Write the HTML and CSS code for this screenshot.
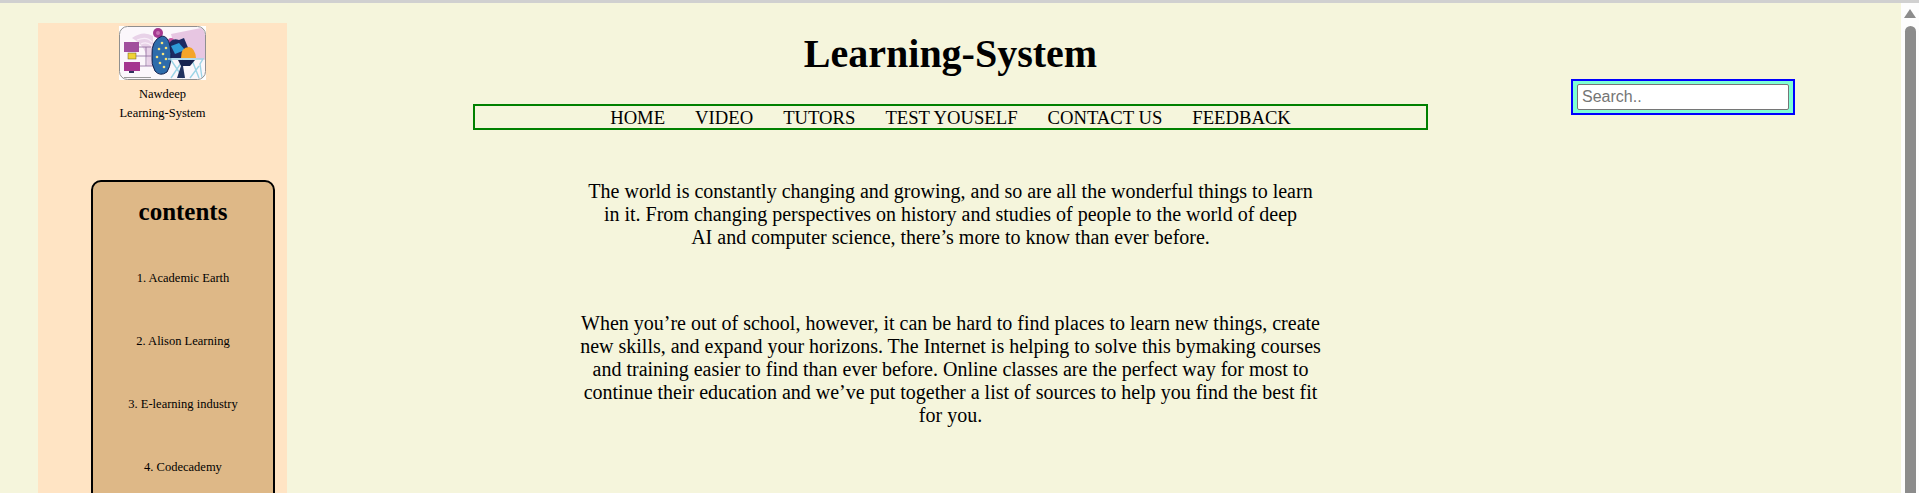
FILE: index.html
```html
<!DOCTYPE html>
<html lang="en">
<head>
    <meta charset="UTF-8">
    <title>Learning-System</title>
    <link rel="stylesheet" href="styles.css">
</head>
<body>
    <div class="topline"></div>
    <div class="page">
        <div class="content">
            <aside class="sidebar">
                <svg class="logo" viewBox="0 0 87 54" width="87" height="54">
                    <defs>
                        <filter id="soft" x="0" y="0" width="100%" height="100%"><feGaussianBlur stdDeviation="0.35"/></filter>
                        <clipPath id="frame"><rect x="1" y="1" width="85" height="52" rx="8"/></clipPath>
                    </defs>
                    <rect width="87" height="54" fill="#fff"/>
                    <g clip-path="url(#frame)" filter="url(#soft)">
                        <rect width="87" height="54" fill="#fbf7fb"/>
                        <path d="M52 8 L87 1 L87 34 L58 30 Z" fill="#e7c6e2"/>
                        <path d="M13 12 Q24 4 34 10 L34 40 L28 40 Q30 22 13 12 Z" fill="#e8d2e8"/>
                        <path d="M18 14 Q28 10 33 16 M22 18 Q28 15 33 20" stroke="#f8eef8" stroke-width="1.2" fill="none"/>
                        <path d="M20 21 H32 M17 30 H32 M20 40 H34 M27 21 V40" stroke="#8d6b9c" stroke-width="0.8" fill="none"/>
                        <rect x="5" y="16" width="15" height="10" fill="#a14f9d"/>
                        <rect x="9" y="27" width="8" height="6" fill="#f0d335" stroke="#6d5a20" stroke-width="0.5"/>
                        <rect x="5" y="36" width="16" height="9" fill="#a5358f"/>
                        <rect x="10" y="45" width="5" height="2" fill="#33305f"/>
                        <circle cx="39" cy="7" r="5" fill="#a4388f"/>
                        <circle cx="39" cy="7" r="2" fill="#c872b4"/>
                        <circle cx="52" cy="15" r="3" fill="#c9529f"/>
                        <path d="M49 20 Q52 11 60 14 L65 12 L70 24 L76 32 L50 32 Z" fill="#1a2c63"/>
                        <path d="M52 20 L60 17 L66 24 L56 28 Z" fill="#2f9bd8"/>
                        <path d="M33 30 Q32 14 43 10 Q49 10 51 20 Q54 36 48 46 Q41 51 36 45 Q32 38 33 30 Z" fill="#2e6cab" stroke="#16224f" stroke-width="1"/>
                        <g fill="#f7e37c">
                            <circle cx="43" cy="17" r="1.3"/>
                            <circle cx="47" cy="22" r="1.3"/>
                            <circle cx="40" cy="23" r="1.3"/>
                            <circle cx="44" cy="28" r="1.3"/>
                            <circle cx="38" cy="31" r="1.3"/>
                            <circle cx="47" cy="33" r="1.3"/>
                            <circle cx="41" cy="37" r="1.3"/>
                            <circle cx="45" cy="41" r="1.3"/>
                        </g>
                        <path d="M62 32 Q62 21 70 21 Q76 22 77 32 Z" fill="#f4a52b"/>
                        <path d="M49 33 H84 L81 38 L83 52 M52 34 L64 52 M64 34 L52 52 M73 34 L80 52 M80 40 L71 52" stroke="#9dd4e6" stroke-width="1.4" fill="none"/>
                        <path d="M59 34 H76 L71 40 H62 Z" fill="#17234f"/>
                        <path d="M62 40 L58 52 H66 L64 40 Z" fill="#22315f"/>
                        <rect x="5" y="51" width="27" height="1" fill="#9a9a9a"/>
                    </g>
                    <rect x="0.5" y="0.5" width="86" height="53" rx="8" fill="none" stroke="#8f8f8f"/>
                </svg>
                <p class="site-name">Nawdeep<br>Learning-System</p>
                <div class="contents">
                    <h2>contents</h2>
                    <p>1. Academic Earth</p>
                    <p>2. Alison Learning</p>
                    <p>3. E-learning industry</p>
                    <p>4. Codecademy</p>
                </div>
            </aside>
            <main class="center">
                <h1>Learning-System</h1>
                <nav class="menu">
                    <a href="#">HOME</a>
                    <a href="#">VIDEO</a>
                    <a href="#">TUTORS</a>
                    <a href="#">TEST YOUSELF</a>
                    <a href="#">CONTACT US</a>
                    <a href="#">FEEDBACK</a>
                </nav>
                <p class="intro">The world is constantly changing and growing, and so are all the wonderful things to learn<br>in it. From changing perspectives on history and studies of people to the world of deep<br>AI and computer science, there’s more to know than ever before.</p>
                <p class="intro second">When you’re out of school, however, it can be hard to find places to learn new things, create<br>new skills, and expand your horizons. The Internet is helping to solve this bymaking courses<br>and training easier to find than ever before. Online classes are the perfect way for most to<br>continue their education and we’ve put together a list of sources to help you find the best fit<br>for you.</p>
            </main>
            <div class="search">
                <input type="text" placeholder="Search..">
            </div>
        </div>
        <div class="scrollbar">
            <div class="arrow"></div>
            <div class="thumb"></div>
        </div>
    </div>
</body>
</html>
```

FILE: styles.css
```css
html, body {
    margin: 0;
    height: 493px;
    overflow: hidden;
}
body {
    font-family: "Liberation Serif", "Times New Roman", serif;
    color: black;
    background-color: beige;
}
.topline {
    height: 3px;
    background-color: #d0d0d0;
}
.page {
    display: flex;
    height: 490px;
}
.content {
    flex: 1;
    display: flex;
    overflow: hidden;
}
.sidebar {
    width: 249px;
    margin: 20px 0 0 38px;
    padding-top: 3px;
    background-color: bisque;
    text-align: center;
    flex-shrink: 0;
}
.logo {
    display: block;
    margin: 0 auto;
}
.site-name {
    margin: 5px 0 0;
    font-size: 12.5px;
    line-height: 19px;
}
.contents {
    width: 180px;
    height: 400px;
    margin: 57px 0 0 53px;
    border: 2px solid black;
    border-radius: 10px;
    background-color: burlywood;
}
.contents h2 {
    margin: 16px 0 44px;
    font-size: 25px;
}
.contents p {
    margin: 0 0 47px;
    font-size: 12.5px;
    line-height: 16px;
}
.center {
    width: 955px;
    margin-left: 186px;
    text-align: center;
    flex-shrink: 0;
}
h1 {
    margin: 28px 0 27px;
    font-size: 40px;
    line-height: 46px;
}
.menu {
    display: flex;
    justify-content: center;
    gap: 30px;
    height: 22px;
    border: 2px solid green;
    font-size: 18.67px;
    line-height: 23px;
}
.menu a {
    color: black;
    text-decoration: none;
}
.intro {
    margin: 50px 0 0;
    font-size: 20px;
    line-height: 23px;
}
.intro.second {
    margin-top: 63px;
}
.search {
    flex-shrink: 0;
    box-sizing: border-box;
    width: 224px;
    height: 36px;
    margin: 76px 0 0 143px;
    padding: 3px 4px;
    border: 2px solid blue;
    background-color: aquamarine;
}
.search input {
    display: block;
    box-sizing: border-box;
    width: 212px;
    height: 26px;
    margin: 0;
    padding: 1px 4px;
    border: 1px solid #767676;
    border-radius: 2px;
    font-family: "Liberation Sans", Arial, sans-serif;
    font-size: 16px;
}
.scrollbar {
    width: 18px;
    flex-shrink: 0;
    background-color: #fdfdfd;
}
.arrow {
    width: 0;
    margin: 6px 0 0 3px;
    border-left: 6px solid transparent;
    border-right: 6px solid transparent;
    border-bottom: 9px solid #8c8c8c;
}
.thumb {
    width: 11px;
    height: 480px;
    margin: 8px 0 0 4px;
    border-radius: 6px 6px 0 0;
    background-color: #8c8c8c;
}
```
